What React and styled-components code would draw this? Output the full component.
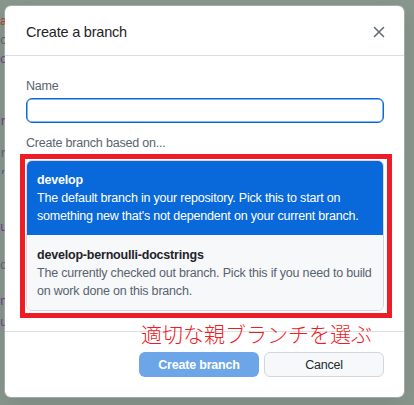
import React, { useState } from "react";
import styled, { createGlobalStyle } from "styled-components";

const GlobalStyle = createGlobalStyle`
  html, body {
    margin: 0;
    padding: 0;
    background: #8a978c;
  }
  * {
    box-sizing: border-box;
  }
`;

const font = `"Liberation Sans", "Noto Sans", Arial, sans-serif`;

const Backdrop = styled.div`
  display: flex;
  align-items: flex-start;
  width: 414px;
  height: 405px;
  overflow: hidden;
`;

const Gutter = styled.div`
  width: 5px;
  flex: none;
  overflow: hidden;
  font-family: "Liberation Mono", monospace;
  font-size: 12px;
`;

const CodeLine = styled.div`
  margin-top: ${(p) => p.$gap}px;
  height: 14px;
  line-height: 14px;
  white-space: nowrap;
  color: ${(p) => p.$color};
  opacity: 0.8;
`;

const Dialog = styled.div`
  width: 399px;
  height: 391px;
  margin-top: 6px;
  background: #fff;
  border-radius: 6px;
  box-shadow: 0 0 0 1px rgba(208, 215, 222, 0.4), 0 8px 24px rgba(66, 74, 83, 0.2);
  display: flex;
  flex-direction: column;
  font-family: ${font};
  color: #1f2328;
  letter-spacing: -0.2px;
`;

const Header = styled.div`
  height: 50px;
  flex: none;
  display: flex;
  align-items: center;
  justify-content: space-between;
  padding: 2px 13px 0 21px;
  border-bottom: 1px solid #d8dee4;
`;

const Title = styled.h1`
  margin: 0;
  font-size: 14.5px;
  font-weight: 400;
  color: #1f2328;
`;

const CloseButton = styled.button`
  width: 24px;
  height: 24px;
  border: 0;
  padding: 0;
  background: transparent;
  display: flex;
  align-items: center;
  justify-content: center;
  color: #656d76;
  cursor: pointer;
`;

const Body = styled.div`
  flex: 1;
  padding: 20px 20px 19px 21px;
  display: flex;
  flex-direction: column;
`;

const Label = styled.label`
  font-size: 12.5px;
  line-height: 20px;
  color: #59636e;
`;

const Input = styled.input`
  margin-top: 2px;
  height: 25px;
  width: 100%;
  border: 1px solid #0969da;
  border-radius: 6px;
  outline: none;
  box-shadow: inset 0 0 0 0.5px #0969da;
  font-family: ${font};
  font-size: 13px;
  padding: 0 8px;
`;

const SubLabel = styled(Label)`
  margin-top: 10px;
`;

const ListWrap = styled.div`
  position: relative;
  margin-top: 7px;
`;

const List = styled.div`
  border: 1px solid #d0d7de;
  border-radius: 6px;
  overflow: hidden;
`;

const Option = styled.div`
  padding: 10px 11px 10px 10px;
  background: ${(p) => (p.$selected ? "#0969da" : "#f6f8fa")};
  color: ${(p) => (p.$selected ? "#fff" : "#59636e")};
  font-size: 12.5px;
  line-height: 18px;
  cursor: pointer;

  & + & {
    padding-top: 11px;
  }
`;

const OptionName = styled.div`
  font-weight: 700;
  color: ${(p) => (p.$selected ? "#fff" : "#1f2328")};
`;

const Highlight = styled.div`
  position: absolute;
  top: -6px;
  left: -6px;
  right: -8px;
  bottom: -7px;
  border: 5px solid #ee1c25;
  pointer-events: none;
`;

const Note = styled.div`
  position: absolute;
  top: calc(100% + 7px);
  left: 115px;
  font-family: "Noto Sans CJK JP", sans-serif;
  font-size: 21px;
  font-weight: 300;
  line-height: 30px;
  letter-spacing: 0;
  color: #ee1c25;
  white-space: nowrap;
  z-index: 2;
`;

const Footer = styled.div`
  flex: none;
  border-top: 1px solid #d8dee4;
  padding: 20px 20px 20px 0;
  display: flex;
  justify-content: flex-end;
  gap: 5px;
`;

const Button = styled.button`
  width: 120px;
  height: 25px;
  border-radius: 6px;
  font-family: ${font};
  font-size: 12.5px;
  letter-spacing: -0.2px;
  cursor: pointer;
  border: 1px solid ${(p) => (p.$primary ? "transparent" : "#d0d7de")};
  background: ${(p) => (p.$primary ? "#6ca6e8" : "#f6f8fa")};
  color: ${(p) => (p.$primary ? "#fff" : "#24292f")};
  font-weight: ${(p) => (p.$primary ? 700 : 400)};
`;

const codeLines = [
  { gap: 15, text: "ad", color: "#b3261e" },
  { gap: 5, text: "ca", color: "#4b5563" },
  { gap: 5, text: "ol]", color: "#5b2a86" },
  { gap: 48, text: "ra", color: "#5b2a86" },
  { gap: 18, text: "re", color: "#4b5563" },
  { gap: 1, text: ",", color: "#1a4fa0" },
  { gap: 45, text: "ua", color: "#5b2a86" },
  { gap: 24, text: "d", color: "#4b5563" },
  { gap: 22, text: "nl", color: "#5b2a86" },
  { gap: 7, text: "ua", color: "#5b2a86" },
];

const options = [
  {
    name: "develop",
    desc: "The default branch in your repository. Pick this to start on something new that's not dependent on your current branch.",
  },
  {
    name: "develop-bernoulli-docstrings",
    desc: "The currently checked out branch. Pick this if you need to build on work done on this branch.",
  },
];

const App = () => {
  const [selected, setSelected] = useState(0);
  const [name, setName] = useState("");

  return (
    <>
      <GlobalStyle />
      <Backdrop>
        <Gutter>
          {codeLines.map((line, i) => (
            <CodeLine key={i} $gap={line.gap} $color={line.color}>
              {line.text}
            </CodeLine>
          ))}
        </Gutter>
        <Dialog>
          <Header>
            <Title>Create a branch</Title>
            <CloseButton aria-label="Close">
              <svg width="12" height="12" viewBox="0 0 12 12">
                <path
                  d="M1.5 1.5l9 9M10.5 1.5l-9 9"
                  stroke="currentColor"
                  strokeWidth="1.6"
                  strokeLinecap="round"
                />
              </svg>
            </CloseButton>
          </Header>
          <Body>
            <Label>Name</Label>
            <Input value={name} onChange={(e) => setName(e.target.value)} />
            <SubLabel>Create branch based on...</SubLabel>
            <ListWrap>
              <List>
                {options.map((opt, i) => (
                  <Option
                    key={opt.name}
                    $selected={selected === i}
                    onClick={() => setSelected(i)}
                  >
                    <OptionName $selected={selected === i}>{opt.name}</OptionName>
                    {opt.desc}
                  </Option>
                ))}
              </List>
              <Highlight />
              <Note>適切な親ブランチを選ぶ</Note>
            </ListWrap>
          </Body>
          <Footer>
            <Button $primary>Create branch</Button>
            <Button>Cancel</Button>
          </Footer>
        </Dialog>
      </Backdrop>
    </>
  );
};

export default App;
